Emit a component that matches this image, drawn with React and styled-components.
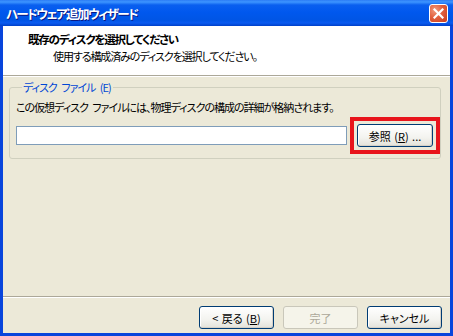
import React from "react";
import styled, { createGlobalStyle } from "styled-components";

const Global = createGlobalStyle`
  html, body { margin: 0; padding: 0; background: #fff; }
  body { font-family: "Noto Sans CJK JP", "Liberation Sans", sans-serif; }
  * { box-sizing: border-box; }
`;

const Window = styled.div`
  width: 453px;
  height: 336px;
  display: flex;
  flex-direction: column;
  background: #0845DC;
  font-family: "Noto Sans CJK JP", "Liberation Sans", sans-serif;
  font-size: 11px;
  font-feature-settings: "palt";
  letter-spacing: -1px;
  word-spacing: 3px;
  color: #000;
  overflow: hidden;
`;

const TitleBar = styled.div`
  height: 26px;
  flex: none;
  display: flex;
  align-items: center;
  justify-content: space-between;
  padding: 0 5px 0 6px;
  background: linear-gradient(
    to bottom,
    #2C7CF5 0px,
    #3D95FF 2px,
    #0A5FEF 5px,
    #0058EE 12px,
    #0055E5 20px,
    #0A5AF0 23px,
    #0040C8 26px
  );
`;

const Title = styled.span`
  color: #fff;
  font-weight: bold;
  font-size: 12.5px;
  letter-spacing: -1.6px;
  text-shadow: 1px 1px 0 #0A1883;
`;

const CloseBtn = styled.div`
  width: 19px;
  height: 19px;
  border: 1px solid #fff;
  border-radius: 3px;
  background: radial-gradient(circle at 30% 30%, #F19A7D 0%, #E2603F 45%, #C93C1B 100%);
  display: flex;
  align-items: center;
  justify-content: center;
`;

const Client = styled.div`
  flex: 1;
  margin: 0 3px 3px 3px;
  background: #ECE9D8;
  display: flex;
  flex-direction: column;
`;

const Header = styled.div`
  height: 50px;
  flex: none;
  background: #fff;
  padding: 6px 0 0 25px;
  display: flex;
  flex-direction: column;
  gap: 2px;
  border-bottom: 1px solid #ACA899;
  box-shadow: 0 1px 0 #fff;
`;

const HeadTitle = styled.div`
  font-weight: bold;
  font-size: 11.5px;
  letter-spacing: -1.2px;
  line-height: 15px;
`;

const HeadSub = styled.div`
  padding-left: 25px;
  letter-spacing: -1.1px;
  line-height: 15px;
`;

const Body = styled.div`
  flex: 1;
  padding: 3px 9px 0 6px;
  margin-top: 1px;
`;

const Group = styled.fieldset`
  margin: 0;
  padding: 5px 0 4px 6px;
  border: 1px solid #D0D0BF;
  border-radius: 3px;
`;

const Legend = styled.legend`
  color: #0046D5;
  padding: 0 2px 0 1px;
  margin-left: 6px;
  line-height: 15px;
`;

const Desc = styled.div`
  line-height: 15px;
  margin-bottom: 2px;
`;

const FileRow = styled.div`
  display: flex;
  align-items: center;
  gap: 3px;
`;

const PathInput = styled.input`
  width: 331px;
  height: 19px;
  border: 1px solid #7F9DB9;
  background: #fff;
  padding: 0 3px;
  font: inherit;
  outline: none;
`;

const Highlight = styled.div`
  border: 4px solid #E8141B;
  padding: 3px;
  display: flex;
`;

const Button = styled.button`
  width: ${(p) => p.$w || 75}px;
  height: 23px;
  padding: 0;
  font: inherit;
  font-feature-settings: "palt";
  letter-spacing: 0px;
  word-spacing: 1px;
  color: ${(p) => (p.disabled ? "#ACA899" : "#000")};
  border: 1px solid ${(p) => (p.disabled ? "#C9C7BA" : "#003C74")};
  border-radius: 3px;
  background: ${(p) =>
    p.disabled
      ? "#F5F4EA"
      : "linear-gradient(to bottom, #FFFFFF 0%, #F3F3EF 60%, #E3E2DA 100%)"};
  box-shadow: ${(p) =>
    p.disabled ? "none" : "inset -1px -1px 0 #D6D0C5, inset 1px 1px 0 #fff"};
  display: flex;
  align-items: center;
  justify-content: center;
`;

const Footer = styled.div`
  flex: none;
  border-top: 1px solid #ACA899;
  box-shadow: inset 0 1px 0 #fff;
  height: 37px;
  display: flex;
  justify-content: flex-end;
  align-items: flex-start;
  gap: 9px;
  padding: 9px 8px 0 0;
`;

const U = styled.span`
  text-decoration: underline;
`;

export default function App() {
  return (
    <>
      <Global />
      <Window>
        <TitleBar>
          <Title>ハードウェア追加ウィザード</Title>
          <CloseBtn>
            <svg width="11" height="11" viewBox="0 0 11 11">
              <path d="M1.5 1.5 L9.5 9.5 M9.5 1.5 L1.5 9.5" stroke="#fff" strokeWidth="2.2" strokeLinecap="square" />
            </svg>
          </CloseBtn>
        </TitleBar>
        <Client>
          <Header>
            <HeadTitle>既存のディスクを選択してください</HeadTitle>
            <HeadSub>使用する構成済みのディスクを選択してください。</HeadSub>
          </Header>
          <Body>
            <Group>
              <Legend>ディスク ファイル (E)</Legend>
              <Desc>この仮想ディスク ファイルには、物理ディスクの構成の詳細が格納されます。</Desc>
              <FileRow>
                <PathInput defaultValue="" />
                <Highlight>
                  <Button $w={76}>参照 (<U>R</U>) ...</Button>
                </Highlight>
              </FileRow>
            </Group>
          </Body>
          <Footer>
            <Button>&lt; 戻る (<U>B</U>)</Button>
            <Button disabled>完了</Button>
            <Button>キャンセル</Button>
          </Footer>
        </Client>
      </Window>
    </>
  );
}
